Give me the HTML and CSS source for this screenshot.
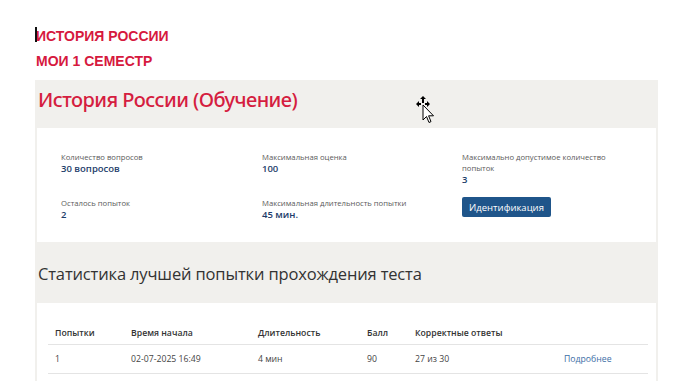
FILE: index.html
```html
<!DOCTYPE html>
<html lang="ru">
<head>
<meta charset="utf-8">
<title>История России</title>
<link rel="stylesheet" href="styles.css">
</head>
<body>
<div class="crumbs">
  <div class="crumb first"><span class="caret"></span>ИСТОРИЯ РОССИИ</div>
  <div class="crumb">МОИ 1 СЕМЕСТР</div>
</div>
<div class="panel">
  <h1 class="title">История России (Обучение)</h1>
  <div class="card info">
    <div class="item">
      <div class="label">Количество вопросов</div>
      <div class="value">30 вопросов</div>
    </div>
    <div class="item">
      <div class="label">Максимальная оценка</div>
      <div class="value">100</div>
    </div>
    <div class="item">
      <div class="label wrap">Максимально допустимое количество попыток</div>
      <div class="value">3</div>
    </div>
    <div class="item">
      <div class="label">Осталось попыток</div>
      <div class="value">2</div>
    </div>
    <div class="item">
      <div class="label">Максимальная длительность попытки</div>
      <div class="value">45 мин.</div>
    </div>
    <div class="item">
      <button class="btn">Идентификация</button>
    </div>
  </div>
  <h2 class="subtitle">Статистика лучшей попытки прохождения теста</h2>
  <div class="card table-card">
    <table class="stats">
      <thead>
        <tr><th class="c1">Попытки</th><th class="c2">Время начала</th><th class="c3">Длительность</th><th class="c4">Балл</th><th class="c5">Корректные ответы</th><th class="c6"></th></tr>
      </thead>
      <tbody>
        <tr><td>1</td><td>02-07-2025 16:49</td><td>4 мин</td><td>90</td><td>27 из 30</td><td><a class="more" href="#">Подробнее</a></td></tr>
      </tbody>
    </table>
  </div>
  <svg class="cursor" width="20" height="28" viewBox="0 0 20 28">
    <g fill="#000">
      <path d="M7 0 L10 3 L8 3 L8 7 L6 7 L6 3 L4 3 Z"/>
      <path d="M0 8 L3 5 L3 7 L5 7 L5 9 L3 9 L3 11 Z"/>
      <path d="M14 8 L11 5 L11 7 L9 7 L9 9 L11 9 L11 11 Z"/>
    </g>
    <path d="M7 9 L7 24 L10.5 20.5 L13 26.5 L15 25.6 L12.6 19.8 L17.5 19.8 Z" fill="#fff" stroke="#000" stroke-width="1" stroke-linejoin="miter"/>
  </svg>
</div>
</body>
</html>
```
FILE: styles.css
```css
html, body {
  margin: 0;
  padding: 0;
  background: #fff;
}
body {
  font-family: "Open Sans", "Noto Sans", sans-serif;
  color: #333;
  width: 685px;
  height: 381px;
  overflow: hidden;
}
.crumbs {
  padding: 28px 0 0 36px;
}
.crumb {
  font-family: "Liberation Sans", Arial, sans-serif;
  font-weight: bold;
  font-size: 14px;
  line-height: 17px;
  color: #d6193e;
  margin-bottom: 8px;
  position: relative;
}
.caret {
  position: absolute;
  left: -1px;
  top: -1px;
  width: 1.5px;
  height: 15px;
  background: #111;
}
.panel {
  position: relative;
  margin: 10px 0 0 35px;
  width: 619px;
  padding: 0 2px;
  background: #f1f0ed;
  height: 400px;
}
.title {
  margin: 0;
  padding: 5px 0 0 1px;
  height: 43px;
  font-family: "Noto Sans", "Open Sans", sans-serif;
  font-weight: 500;
  font-size: 20px;
  letter-spacing: -0.55px;
  line-height: 30px;
  color: #d51d40;
}
.card {
  background: #fff;
}
.info {
  display: grid;
  grid-template-columns: 201px 200px 160px;
  row-gap: 12px;
  padding: 24px 24px 22px;
  height: 114px;
  box-sizing: border-box;
}
.label {
  font-size: 7.7px;
  line-height: 11px;
  color: #5a5a5a;
}
.value {
  font-size: 9.5px;
  line-height: 12px;
  font-weight: 600;
  color: #1d3d6a;
}
.btn {
  display: block;
  margin-top: -1px;
  font-family: inherit;
  font-size: 9.5px;
  color: #fff;
  background: #1f558a;
  border: 0;
  border-radius: 2px;
  height: 20px;
  width: 89px;
  padding: 0;
}
.subtitle {
  margin: 0;
  padding: 20px 0 0 1px;
  height: 41px;
  font-weight: 400;
  font-size: 16.5px;
  letter-spacing: -0.15px;
  line-height: 24px;
  color: #333;
}
.table-card {
  padding: 20px 10px 0 11px;
  height: 80px;
}
.stats {
  border-collapse: collapse;
  table-layout: fixed;
  width: 600px;
  font-size: 8.7px;
}
.stats th {
  box-sizing: border-box;
  text-align: left;
  font-weight: 600;
  color: #333;
  height: 21px;
  padding: 0 0 0 7px;
  border-bottom: 1px solid #e4e4e4;
}
.stats td {
  height: 28px;
  padding: 0 0 0 7px;
  color: #444;
  border-bottom: 1px solid #e4e4e4;
}
.c1 { width: 76px; }
.c2 { width: 127px; }
.c3 { width: 109px; }
.c4 { width: 48px; }
.c5 { width: 149px; }
.more {
  color: #3c6ea6;
  text-decoration: none;
}
.cursor {
  position: absolute;
  left: 381px;
  top: 16px;
}
```
